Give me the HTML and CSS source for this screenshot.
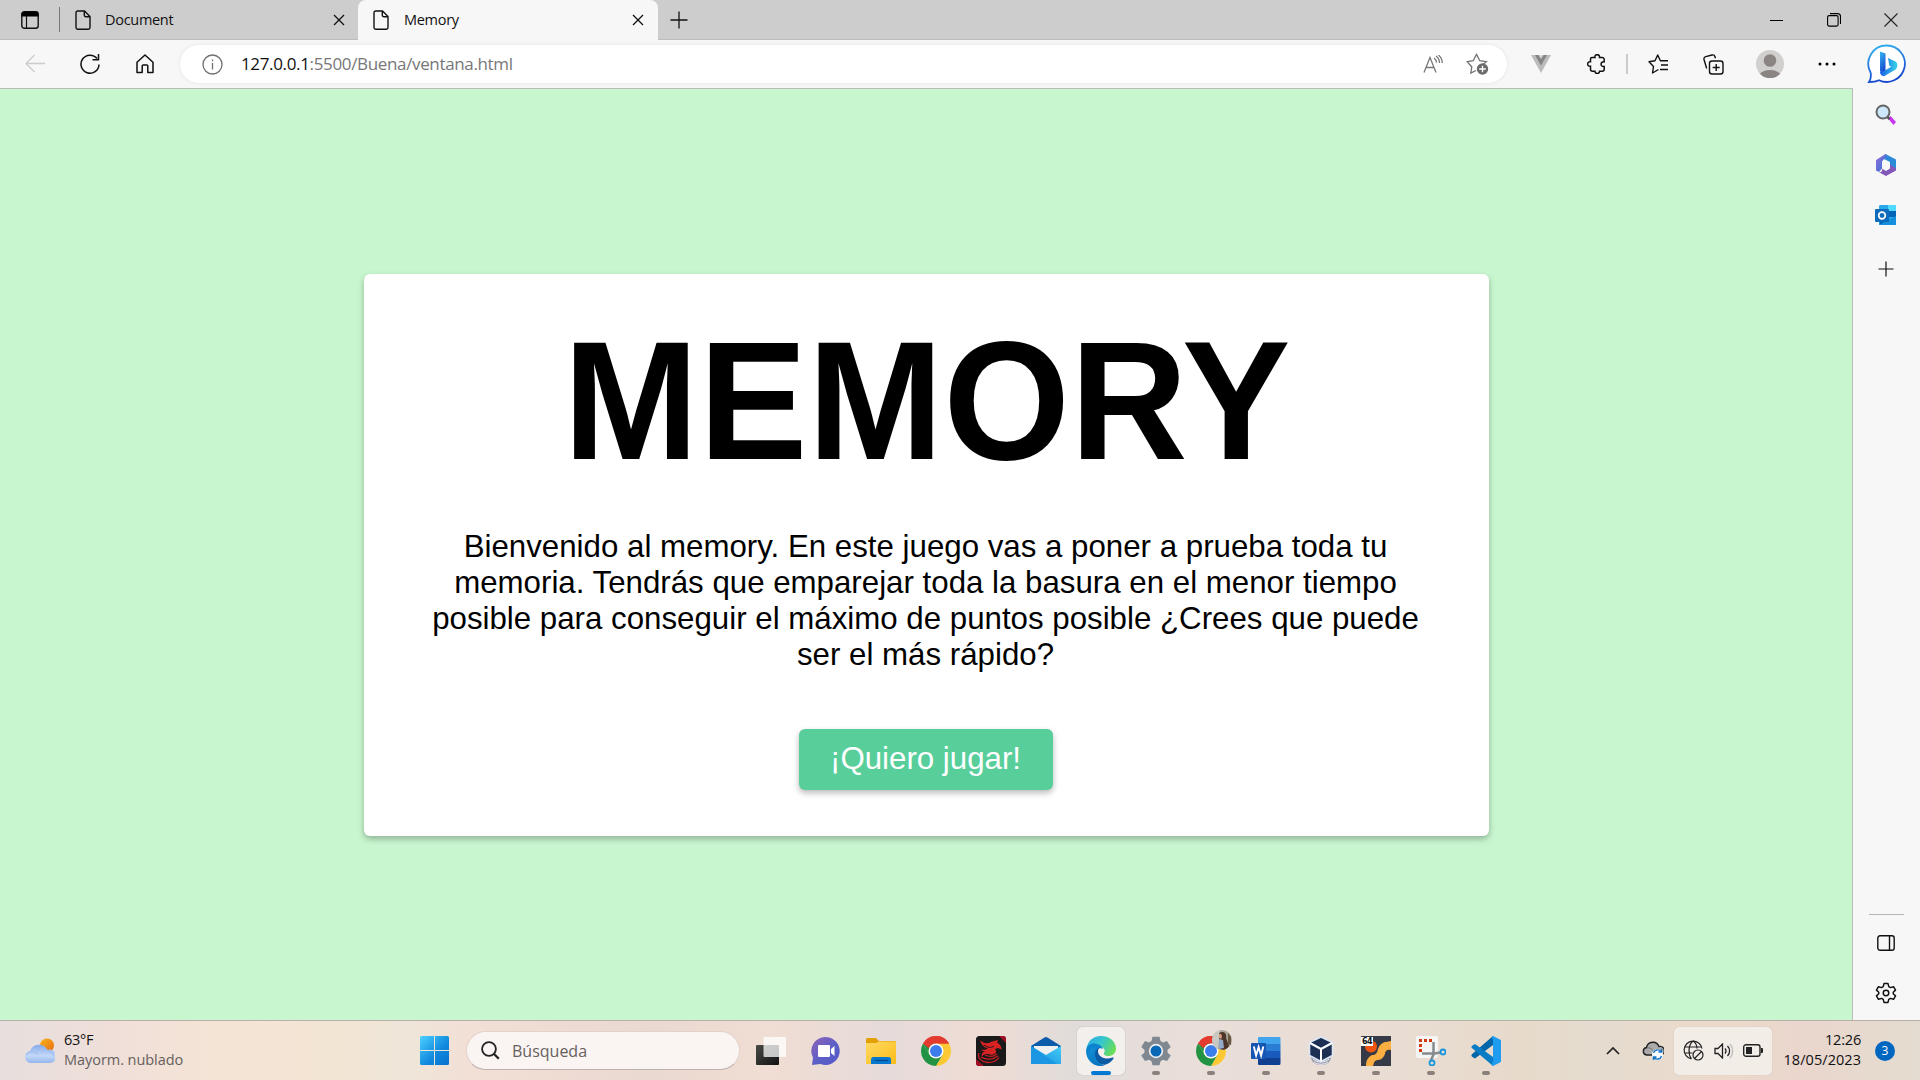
FILE: index.html
```html
<!DOCTYPE html>
<html lang="es">
<head>
<meta charset="utf-8">
<title>Memory</title>
<link rel="stylesheet" href="styles.css">
</head>
<body>
<svg class="defs" width="0" height="0" aria-hidden="true">
  <defs>
    <symbol id="page-icon" viewBox="0 0 16 20"><path d="M3 1h6.500L15 6.500V17.500a1.700 1.700 0 0 1-1.700 1.700H2.700A1.700 1.700 0 0 1 1 17.500V2.700A1.700 1.700 0 0 1 2.700 1zM9.300 1v4.300a1.500 1.500 0 0 0 1.500 1.500H15" fill="none" stroke="#111" stroke-width="1.400"/></symbol>
    <symbol id="close-icon" viewBox="0 0 12 12"><path d="M1 1l10 10M11 1L1 11" stroke="#111" stroke-width="1.300"/></symbol>
    <symbol id="chrome-icon" viewBox="0 0 30 30">
      <path d="M15 15L2.010 7.500A15 15 0 0 1 27.990 7.500z" fill="#e33b2e"/>
      <path d="M15 0a15 15 0 0 1 13 7.500H15z" fill="#e33b2e"/>
      <path d="M27.990 7.500A15 15 0 0 1 15 30L21.500 18.700 15 7.500z" fill="#fcc934"/>
      <path d="M2.010 7.500A15 15 0 0 0 15 30l6.500-11.300H8.500z" fill="#229342"/>
      <path d="M2.010 7.500L8.500 18.700 15 15V7.500z" fill="#229342"/>
      <path d="M2.010 7.500A15 15 0 0 1 28 7.500H15a7.500 7.500 0 0 0-7 5z" fill="#e33b2e"/>
      <circle cx="15" cy="15" r="7.500" fill="#fff"/><circle cx="15" cy="15" r="6" fill="#3b7ded"/>
    </symbol>
    <linearGradient id="g-bing" x1="0" y1="0" x2="0.300" y2="1"><stop offset="0" stop-color="#35b8f2"/><stop offset="1" stop-color="#1747cf"/></linearGradient>
    <linearGradient id="g-bing-b" x1="0" y1="0" x2="1" y2="0"><stop offset="0" stop-color="#1c5ee8"/><stop offset="1" stop-color="#35d3e8"/></linearGradient>
    <linearGradient id="g-win" x1="0" y1="0" x2="1" y2="1"><stop offset="0" stop-color="#4cd0ff"/><stop offset="0.600" stop-color="#0f88dd"/><stop offset="1" stop-color="#0670cf"/></linearGradient>
    <linearGradient id="g-sun" x1="0" y1="0" x2="1" y2="1"><stop offset="0" stop-color="#f6b51e"/><stop offset="1" stop-color="#ea6a10"/></linearGradient>
    <linearGradient id="g-cloud" x1="0" y1="0" x2="0" y2="1"><stop offset="0" stop-color="#85a9e9"/><stop offset="0.600" stop-color="#c3d9f8"/><stop offset="1" stop-color="#94b5ec"/></linearGradient>
    <linearGradient id="g-chat" x1="0" y1="0" x2="1" y2="1"><stop offset="0" stop-color="#9163b8"/><stop offset="0.550" stop-color="#5b5fc7"/><stop offset="1" stop-color="#5558c5"/></linearGradient>
    <linearGradient id="g-folder" x1="0" y1="0" x2="1" y2="1"><stop offset="0" stop-color="#ffd964"/><stop offset="1" stop-color="#fbbc16"/></linearGradient>
    <linearGradient id="g-edge-top" x1="0" y1="0" x2="1" y2="0.500"><stop offset="0" stop-color="#2aa8e3"/><stop offset="0.500" stop-color="#35c5cf"/><stop offset="1" stop-color="#69df54"/></linearGradient>
    <linearGradient id="g-edge-low" x1="0" y1="0" x2="1" y2="1"><stop offset="0" stop-color="#169ddd"/><stop offset="1" stop-color="#0753a0"/></linearGradient>
    <linearGradient id="g-mail" x1="0" y1="1" x2="1" y2="0"><stop offset="0" stop-color="#168bdd"/><stop offset="1" stop-color="#43cdf7"/></linearGradient>
    <linearGradient id="g-loop" x1="0" y1="0" x2="1" y2="1"><stop offset="0" stop-color="#9a6fd8"/><stop offset="1" stop-color="#2a70d8"/></linearGradient>
    <linearGradient id="g-view" x1="0" y1="0" x2="1" y2="1"><stop offset="0" stop-color="#4a4a48"/><stop offset="1" stop-color="#111"/></linearGradient>
  </defs>
</svg>

<header class="tabs">
  <svg class="workspace" width="18" height="18" viewBox="0 0 18 18"><rect x=".8" y=".8" width="16.400" height="16.400" rx="2.500" fill="none" stroke="#111" stroke-width="1.400"/><path d="M.5 5.500V3A2.500 2.500 0 0 1 3 .5h12A2.500 2.500 0 0 1 17.500 3v2.500z"/><path d="M5.500 5v12" stroke="#111" stroke-width="1.200"/></svg>
  <div class="tab-divider"></div>
  <div class="tab">
    <svg width="16" height="20"><use href="#page-icon"/></svg>
    <span class="tab-title title-document">Document</span>
    <svg class="tab-close" width="12" height="12"><use href="#close-icon"/></svg>
  </div>
  <div class="tab active">
    <svg width="16" height="20"><use href="#page-icon"/></svg>
    <span class="tab-title title-memory">Memory</span>
    <svg class="tab-close" width="12" height="12"><use href="#close-icon"/></svg>
  </div>
  <svg class="new-tab" width="18" height="18" viewBox="0 0 18 18"><path d="M9 .5v17M.5 9h17" stroke="#111" stroke-width="1.300"/></svg>
  <div class="window-buttons">
    <svg width="14" height="14" viewBox="0 0 14 14"><path d="M0 7.500h13" stroke="#000"/></svg>
    <svg width="14" height="14" viewBox="0 0 14 14" fill="none" stroke="#000" stroke-width="1.100"><rect x=".6" y="2.600" width="10.500" height="10.500" rx="1.500"/><path d="M3 .6h7.500a3 3 0 0 1 3 3V11"/></svg>
    <svg width="14" height="14" viewBox="0 0 14 14"><path d="M.5.500l13 13M13.500.500l-13 13" stroke="#222" stroke-width="1.100"/></svg>
  </div>
</header>

<nav class="toolbar">
  <svg class="back" width="20" height="20" viewBox="0 0 20 20" fill="none" stroke="#ccc" stroke-width="1.300"><path d="M20 9.500H1M9.500 1L1 9.500 9.500 18"/></svg>
  <svg class="reload" width="20" height="20" viewBox="0 0 20 20" fill="none" stroke="#111" stroke-width="1.500"><path d="M19 10.500A9 9 0 1 1 17 4.500M18.500 0v5.800h-6"/></svg>
  <svg class="home" width="18" height="20" viewBox="0 0 18 20" fill="none" stroke="#111" stroke-width="1.500" stroke-linejoin="round"><path d="M1 8.300L9 1l8 7.300V18.500h-5.200V12a1 1 0 0 0-1-1H7.200a1 1 0 0 0-1 1v6.500H1z"/></svg>
  <div class="address">
    <svg width="21" height="21" viewBox="0 0 21 21" fill="none" stroke="#707070" stroke-width="1.300"><circle cx="10.500" cy="10.500" r="9.500"/><path d="M10.500 9v6.500M10.500 5.500v1.700"/></svg>
    <span class="url"><span class="host">127.0.0.1</span>:5500/Buena/ventana.html</span>
    <svg class="aloud" width="20" height="18" viewBox="0 0 20 18" fill="none" stroke="#777" stroke-width="1.300"><path d="M1 17.500L7 2.500l6 15M3 12.500h8M11 3a6 6 0 0 1 2.500 4.500M13 1a9 9 0 0 1 3.500 7M15.500 0A11 11 0 0 1 19.300 8"/></svg>
    <svg width="23" height="22" viewBox="0 0 23 22"><path d="M10 17.500L4.800 20l1-6L1.200 8.700l6-1L10.500 1.500l3.300 6.200 6.500 1-3 2.500" fill="none" stroke="#707070" stroke-width="1.300"/><circle cx="16.500" cy="16" r="5.700" fill="#6b6b6b"/><path d="M16.500 12.700v6.600M13.200 16h6.600" stroke="#fff" stroke-width="1.300"/></svg>
  </div>
  <svg class="vue" width="20" height="18" viewBox="0 0 20 18"><path d="M0 0h20L10 18z" fill="#bcbcbc"/><path d="M4 0h12l-6 10.500z" fill="#858585"/><path d="M7.500 0h5L10 4z" fill="#d4d4d4"/></svg>
  <svg class="puzzle" width="20" height="20" viewBox="0 0 20 20" fill="none" stroke="#111" stroke-width="1.500"><path d="M5 3.500h3c-.8-3.800 5.200-3.800 4.500 0h2.700a2 2 0 0 1 2 2v2.300c-4.200-.5-4.200 5.300 0 4.700v2.700a2 2 0 0 1-2 2h-2.700c.5 3-5 3-4.500 0H5.500a2 2 0 0 1-2-2v-3c-3.800.7-3.800-5 0-4.500V5a1.500 1.500 0 0 1 1.500-1.500z"/></svg>
  <div class="tool-divider"></div>
  <svg class="favorites" width="21" height="20" viewBox="0 0 21 20" fill="none" stroke="#111" stroke-width="1.400"><path d="M10.500 15.500L4.500 19l1-6.500L1 7.700l6-.9L9.700 1l2.700 5.700H20M13 11h7M12 15.500h8" stroke-linejoin="round"/></svg>
  <svg class="collections" width="21" height="21" viewBox="0 0 21 21" fill="none" stroke="#111" stroke-width="1.400"><rect x="6.500" y="7" width="13.500" height="13" rx="2.500"/><path d="M13.200 10v7M9.700 13.500h7M3.700 14.500L1 5.500A2.500 2.500 0 0 1 2.800 2.600L9 1a2.500 2.500 0 0 1 3 1.800l.4 1.500"/></svg>
  <svg class="avatar" width="28" height="28" viewBox="0 0 28 28"><circle cx="14" cy="14" r="14" fill="#d2d0ce"/><circle cx="14" cy="10.500" r="6.300" fill="#8a8583"/><path d="M4 24a11 7 0 0 1 20 0 14 14 0 0 1-20 0z" fill="#8a8583"/></svg>
  <svg class="more" width="18" height="4" viewBox="0 0 18 4"><circle cx="2" cy="2" r="1.500"/><circle cx="9" cy="2" r="1.500"/><circle cx="16" cy="2" r="1.500"/></svg>
  <svg class="bing" width="40" height="40" viewBox="0 0 40 40"><path d="M20 1.500a18.200 18.200 0 1 1-8 34.700c-3 1.500-6 1.800-10 1.800 1.700-2.500 2.500-5 1.600-9.500A18.200 18.200 0 0 1 20 1.500z" fill="#fff" stroke="url(#g-bing)" stroke-width="1.800"/><path d="M13 7.500l5.500 2v17.700L15.500 30 13 27z" fill="url(#g-bing)"/><path d="M21 14l7.500 3.500c2.800 2 2.300 6 0 8L17.500 32c-2 1-4.500-1.500-4.500-4l3.500-.7 7.800-4.500-2-1z" fill="url(#g-bing-b)"/></svg>
</nav>

<div class="browser-body">
  <main class="viewport">
    <section class="card">
      <h1>MEMORY</h1>
      <p>Bienvenido al memory. En este juego vas a poner a prueba toda tu memoria. Tendrás que emparejar toda la basura en el menor tiempo posible para conseguir el máximo de puntos posible ¿Crees que puede ser el más rápido?</p>
      <button type="button">¡Quiero jugar!</button>
    </section>
  </main>
  <aside class="sidebar">
    <svg width="22" height="22" viewBox="0 0 22 22"><path d="M13 14.500l2.500-2.500 5.500 6-2.500 3z" fill="#c936f0"/><path d="M11.500 12l3 3" stroke="#555" stroke-width="2.500"/><circle cx="8" cy="8" r="6.500" fill="#cce8fa" stroke="#666" stroke-width="2"/></svg>
    <svg class="m365" width="22" height="24" viewBox="0 0 22 24"><path d="M10.500 1L21 6.500v10L15 13.500V9L9 6 5 8z" fill="#2c8bd8"/><path d="M10.500 1c2 1.500 1 4-1.500 5L7 8.500v7L4 19l-3-1.500V7z" fill="url(#g-loop)"/><path d="M21 11.500v6L11 23l-7-3.800c2 .3 4-1.200 3-3.700l4 2.500 4-2.500v-4l6 4z" fill="#8257b9"/></svg>
    <svg class="outlook" width="22" height="22" viewBox="0 0 22 22"><path d="M5 1h16v20H4V2z" fill="#28a8ea"/><path d="M13 1h8v6h-8z" fill="#50d9ff"/><path d="M13 7h8v6h-8zM4 13h9v8H5z" fill="#0364b8"/><path d="M4 21l17-9v8a1 1 0 0 1-1 1z" fill="#1490df"/><rect y="5" width="14" height="13" rx="1" fill="#0f6cbd"/><circle cx="7" cy="11.500" r="3.300" fill="none" stroke="#fff" stroke-width="1.700"/></svg>
    <svg class="side-plus" width="16" height="16" viewBox="0 0 16 16"><path d="M8 .5v15M.5 8h15" stroke="#111" stroke-width="1.200"/></svg>
    <div class="side-divider"></div>
    <svg class="panel" width="18" height="16" viewBox="0 0 18 16" fill="none" stroke="#111" stroke-width="1.400"><rect x=".8" y=".8" width="16.400" height="14.400" rx="2.200"/><path d="M12.500 1v14"/></svg>
    <svg width="22" height="22" viewBox="0 0 24 24" fill="none" stroke="#111" stroke-width="1.600" stroke-linejoin="round"><circle cx="12" cy="12" r="3"/><path d="M9.800 1.700h4.400l.8 3.300 1.900 1.100 3.300-1 2.200 3.800-2.500 2.300v1.600l2.500 2.300-2.200 3.800-3.300-1-1.900 1.100-.8 3.300H9.800L9 19l-1.900-1.100-3.300 1-2.200-3.800 2.500-2.300v-1.600L1.600 8.900l2.200-3.800 3.300 1L9 5z"/></svg>
  </aside>
</div>

<footer class="taskbar">
  <div class="weather">
    <svg width="30" height="26" viewBox="0 0 30 26"><circle cx="22" cy="7.500" r="7" fill="url(#g-sun)"/><path d="M6 25a6 6 0 0 1-1-11.900A9.500 9.500 0 0 1 22.500 12 6.700 6.700 0 1 1 24 25z" fill="url(#g-cloud)"/><path d="M1 17c4-5 9-4 12-1M17 14c3-3 9-2 12 4" fill="none" stroke="#a6c1f1" stroke-width="1.500"/></svg>
    <div class="weather-text"><span class="temp">63°F</span><span class="condition">Mayorm. nublado</span></div>
  </div>
  <svg class="start" width="29" height="29" viewBox="0 0 29 29"><path d="M1.500 0H14v14H0V1.500A1.500 1.500 0 0 1 1.500 0zM15 0h12.500A1.500 1.500 0 0 1 29 1.500V14H15zM0 15h14v14H1.500A1.500 1.500 0 0 1 0 27.500zM15 15h14v12.500a1.500 1.500 0 0 1-1.500 1.500H15z" fill="url(#g-win)"/></svg>
  <div class="search">
    <svg width="19" height="19" viewBox="0 0 19 19" fill="none" stroke="#222"><circle cx="8" cy="8" r="6.900" stroke-width="1.800"/><path d="M12.800 12.800l5 5" stroke-width="2.300"/></svg>
    <span>Búsqueda</span>
  </div>
  <div class="apps">
    <div class="app"><svg width="30" height="30" viewBox="0 0 30 30"><rect y="9" width="23" height="20" rx="1" fill="url(#g-view)"/><rect x="7.500" y="1" width="22.500" height="20" rx="1" fill="#fff" opacity=".75"/></svg></div>
    <div class="app"><svg width="30" height="30" viewBox="0 0 30 30"><path d="M15 1a14 14 0 1 1-5.500 27L1 29l1-7.500A14 14 0 0 1 15 1z" fill="url(#g-chat)"/><path d="M8 9h10a1 1 0 0 1 1 1v10a1 1 0 0 1-1 1H8a1 1 0 0 1-1-1V10a1 1 0 0 1 1-1zM20 13l3.500-3v10L20 17z" fill="#fff"/></svg></div>
    <div class="app"><svg width="30" height="30" viewBox="0 0 30 30"><path d="M0 3.500A1.500 1.500 0 0 1 1.500 2H10l3 3h16a1 1 0 0 1 1 1v5H0z" fill="#e2a007"/><path d="M0 7h10l3-1.500h17V28H0z" fill="url(#g-folder)"/><path d="M5 28v-4.500A2.500 2.500 0 0 1 7.500 21h15a2.500 2.500 0 0 1 2.500 2.500V28z" fill="#0878cf"/><path d="M9 24.500h13" stroke="#06478a" stroke-width="1.200"/></svg></div>
    <div class="app"><svg width="30" height="30"><use href="#chrome-icon"/></svg></div>
    <div class="app"><svg width="30" height="30" viewBox="0 0 30 30"><rect width="30" height="30" rx="3.500" fill="#191919"/><path d="M23 0h4a3 3 0 0 1 3 3v4zM0 23v4a3 3 0 0 0 3 3h5z" fill="#a00e22"/><path d="M4 4c5 5 9 3 12 1.500L22 4l-1 2.500c3 1.500 4.500 4 4.500 7L22 12l-3 1c3 4-1 6.500-5 5.500-4-1-7 0-8 2-1-3 1-5 4-5-3 0-4-1-5-2 3 1 5 0 7-1-4-1-7-4-8-8.500z" fill="#d92323"/><path d="M3 17c-2 5 3 9.500 9 9.500 5 0 9-2 11-5M5 21c5 3 12 3 17-1M9 19c4 2 8 2 12-1" fill="none" stroke="#c81f22" stroke-width="1.300"/><path d="M8 9c4 3 7 3 10 1" fill="none" stroke="#191919"/></svg></div>
    <div class="app"><svg width="30" height="30" viewBox="0 0 30 30"><path d="M0 10L13.500 1.500a3 3 0 0 1 3 0L30 10v5H0z" fill="#0d5cab"/><path d="M3 10h24v5L15 20 3 14z" fill="#f0f0f0"/><path d="M0 10l15 9 15-9v18H0z" fill="url(#g-mail)"/><path d="M0 28V10l26 18z" fill="#1b96e2"/></svg></div>
    <div class="app current"><svg width="30" height="30" viewBox="0 0 30 30"><path d="M.3 14C1 5.500 7 0 15 0c9 0 15 6 15 12.500 0 5-4 7.500-8 7.500-3 0-5-1.300-4-3 2-3-.5-6-4-6C7 11 1 18 3 24A15 15 0 0 1 .3 14z" fill="url(#g-edge-top)"/><path d="M.2 15C.5 9 5 7 9 7.500c4 .5 7 2.500 8 5.500-6-3-9 5-4 12 2 3 4 4.500 6 4.500C9 32 0 25 .2 15z" fill="#0c83cf"/><path d="M13.500 11.500C7 14 8 24 14 27.500c4 3 10 .5 13.500-5 .5-1-.3-1.300-1-1C20 24.500 12 21 12 15.500c0-1.500.5-3 1.500-4z" fill="#0c59a4"/><path d="M3 23C1 16 6 9 12 11c-5 3-6 10-2 15 3 4 7 3.500 9 3.500C12 31 5 28.500 3 23z" fill="url(#g-edge-low)" opacity=".65"/></svg></div>
    <div class="app open"><svg width="30" height="30" viewBox="0 0 30 30"><path d="M11.500.800h7l1 4.200 2.500 1.500L26 5l3.700 6-3.200 3v2.500l3.200 3L26 25l-4-1.200-2.500 1.500-1 4h-7l-1-4L8 23.800 4 25 .3 19.500l3.200-3V14L.3 11 4 5l4 1.500L10.500 5z" fill="#7f8790"/><circle cx="15" cy="15" r="7.200" fill="#edf0f3"/><circle cx="15" cy="15" r="5.500" fill="#0968b5"/></svg></div>
    <div class="app open profile"><svg width="30" height="30"><use href="#chrome-icon"/></svg><svg class="profile-badge" width="20" height="20" viewBox="0 0 20 20"><circle cx="10" cy="10" r="10" fill="#a9a298"/><path d="M0 10A10 10 0 0 1 8 .2L6 19A10 10 0 0 1 0 10z" fill="#c9c9c4"/><path d="M7 3c5-3 8 1 7 5l3 8c-3 5-8 4-10 2z" fill="#4c342b"/><path d="M7 4c2-1 3 1 3 3l-1 2-2-1z" fill="#d49b7e"/><path d="M7 9l4 1 1 8-5 1z" fill="#95a9c8"/><path d="M16 3l3 4v8l-3-1z" fill="#6a553f"/></svg></div>
    <div class="app open"><svg width="30" height="30" viewBox="0 0 30 30"><path d="M8 1h20a1.500 1.500 0 0 1 1.500 1.500V8H7V2a1 1 0 0 1 1-1z" fill="#41a5ee"/><path d="M7 8h22.500v7H7z" fill="#2b7cd3"/><path d="M7 15h22.500v7H7z" fill="#185abd"/><path d="M7 22h22.500v5.500A1.500 1.500 0 0 1 28 29H8a1 1 0 0 1-1-1z" fill="#103f91"/><rect y="7" width="15" height="16" rx="1" fill="#1755b2"/><path d="M2.800 10.500l2.300 9 2.500-8.500 2.500 8.500 2.200-9" fill="none" stroke="#fff" stroke-width="1.900"/></svg></div>
    <div class="app open"><svg width="30" height="30" viewBox="0 0 30 30"><path d="M5 20c0 6 4 9 10 9s10-3 10-9z" fill="#9a9cab"/><path d="M7 23c4 4 12 4 16 0M8 26c4 3 10 3 14 0" fill="none" stroke="#eeeff8"/><path d="M15 1l11.500 5.500v13L15 25.500 3.500 19.500v-13z" fill="#1c3054" stroke="#dce7f5" stroke-width="1.600"/><path d="M4 7l11 6 11-6M15 13v12" fill="none" stroke="#fff" stroke-width="2"/></svg></div>
    <div class="app open numbered"><svg width="30" height="30" viewBox="0 0 30 30"><path fill="#363a46" d="M0 0h30v30H0z"/><circle cx="10" cy="10.500" r="6" fill="#ef5410"/><path d="M5 30c0-7 3-9 6-11 4 0 5-2 6-6 2-5 5-7 8-7l5-1v9c-4-1-6 1-6 4-2 5-5 6-8 6-3 1-3 3-4 6z" fill="#fbae42"/></svg><span class="app-number">64</span></div>
    <div class="app open"><svg width="30" height="30" viewBox="0 0 30 30"><rect width="22" height="22" rx="2" fill="#f5f5f5"/><path d="M16 4.500H4.500V18" fill="none" stroke="#d33810" stroke-width="3" stroke-dasharray="3 2"/><path d="M17.500 6v12.500L15 24M6 17.500h12.500l5.500-1" fill="none" stroke="#858a8d" stroke-width="2.500"/><g fill="none" stroke="#1796df" stroke-width="1.800"><circle cx="27" cy="16" r="2.500"/><circle cx="16" cy="27" r="2.500"/></g></svg></div>
    <div class="app open"><svg width="30" height="30" viewBox="0 0 30 30"><path d="M22 0v9L4 22.500 1.500 21c-1.500-1-1.500-2 0-3.200z" fill="#0065a9"/><path d="M4 8l18 13v9L1.500 12.500c-1.500-1-1.500-2 0-3z" fill="#087dc5"/><path d="M22 0l7 3.500a2 2 0 0 1 1 1.500v20a2 2 0 0 1-1 1.500L22 30l-1.500-1 1.500-3V4l-1.500-3z" fill="#1f9cf0"/></svg></div>
  </div>
  <div class="tray">
    <svg width="14" height="9" viewBox="0 0 14 9"><path d="M1 8l6-6 6 6" fill="none" stroke="#222" stroke-width="1.700"/></svg>
    <svg class="cloud" width="22" height="20" viewBox="0 0 22 20"><path d="M4.500 14a3.800 3.800 0 0 1 0-7.500A6.500 6.500 0 0 1 17 5.500a4.300 4.300 0 0 1 2 8.500z" fill="#aaa" stroke="#222" stroke-width="1.400"/><path d="M5 7c5-1 5 3 8 4" fill="none" stroke="#777"/><circle cx="15.500" cy="13.500" r="5.500" fill="#fff"/><path d="M11.500 12a4.300 4.300 0 0 1 7.500-1.500M19.500 8v3h-3M19.500 15a4.300 4.300 0 0 1-7.500 1.500M11.500 19v-3h3" fill="none" stroke="#1473c9" stroke-width="1.400"/></svg>
    <div class="status">
      <svg width="21" height="21" viewBox="0 0 21 21" fill="none" stroke="#222" stroke-width="1.200"><path d="M8.500 19A9 9 0 1 1 19 8.500M1.500 7h17M1.500 13h8M10 1c-5 4-5 13-1.500 18M10 1c3 2 4 4.500 4 7.500"/><circle cx="15" cy="15" r="5"/><path d="M11.500 18.500l7-7"/></svg>
      <svg width="20" height="16" viewBox="0 0 20 16" fill="none" stroke="#222" stroke-width="1.300"><path d="M1 5.500h3L8.500 1v14L4 10.500H1zM11 5.500a4 4 0 0 1 0 5M13.500 3a7 7 0 0 1 0 10"/><path d="M16 1a10.500 10.500 0 0 1 0 14" stroke="#bbb"/></svg>
      <svg width="20" height="13" viewBox="0 0 20 13"><rect x=".7" y=".7" width="16.300" height="11.600" rx="2.300" fill="none" stroke="#222" stroke-width="1.400"/><rect x="3" y="3" width="6" height="7" fill="#222"/><path d="M18 4h1a1 1 0 0 1 1 1v3a1 1 0 0 1-1 1h-1z" fill="#222"/></svg>
    </div>
    <div class="clock"><span class="time">12:26</span><span class="date">18/05/2023</span></div>
    <span class="notifications">3</span>
  </div>
</footer>
</body>
</html>
```

FILE: styles.css
```css
* {
  box-sizing: border-box;
}

body {
  margin: 0;
  width: 1920px;
  height: 1080px;
  overflow: hidden;
  display: flex;
  flex-direction: column;
  font-family: "Open Sans", "Noto Sans", sans-serif;
  color: #111;
  background: #f7f7f7;
}

svg {
  display: block;
  flex: none;
}

.defs {
  position: absolute;
}

/* Tab strip */
.tabs {
  height: 40px;
  flex: none;
  display: flex;
  align-items: center;
  background: #cdcdcd;
  border-bottom: 1px solid #bdbdbd;
}

.workspace {
  margin-left: 21px;
}

.tab-divider {
  width: 1px;
  height: 25px;
  margin-left: 20px;
  background: #777;
}

.tab {
  width: 298px;
  height: 40px;
  padding: 0 13px 0 15px;
  display: flex;
  align-items: center;
}

.tab.active {
  width: 300px;
  padding-right: 14px;
  background: #f7f7f7;
  border-radius: 8px 8px 0 0;
}

.tab-title {
  flex: 1;
  margin-left: 14px;
  font-size: 14.500px;
  line-height: 20px;
  white-space: nowrap;
}

.title-document {
  letter-spacing: -0.300px;
}

.title-memory {
  margin-left: 15px;
  letter-spacing: -0.300px;
}

.new-tab {
  margin-left: 12px;
}

.window-buttons {
  margin-left: auto;
  margin-right: 22px;
  display: flex;
  gap: 43px;
}

/* Toolbar */
.toolbar {
  height: 48px;
  flex: none;
  display: flex;
  align-items: center;
}

.back {
  margin-left: 25px;
}

.reload {
  margin-left: 35px;
}

.home {
  margin-left: 36px;
}

.address {
  width: 1327px;
  height: 38px;
  margin-left: 26px;
  padding: 0 18px 0 22px;
  display: flex;
  align-items: center;
  background: #fff;
  border-radius: 19px;
  box-shadow: 0 0 4px rgba(0, 0, 0, 0.080);
}

.url {
  flex: 1;
  margin-left: 18px;
  padding-bottom: 2px;
  font-size: 17px;
  letter-spacing: -0.350px;
  color: #777;
}

.host {
  color: #111;
}

.aloud {
  margin-right: 23px;
}

.vue {
  margin-left: 24px;
}

.puzzle {
  margin-left: 36px;
}

.tool-divider {
  width: 2px;
  height: 20px;
  margin-left: 19px;
  background: #ccc;
}

.favorites {
  margin-left: 20px;
}

.collections {
  margin-left: 34px;
}

.avatar {
  margin-left: 32px;
}

.more {
  margin-left: 34px;
}

.bing {
  margin-left: 31px;
}

/* Page and sidebar */
.browser-body {
  height: 932px;
  flex: none;
  display: flex;
}

.viewport {
  width: 1853px;
  display: flex;
  justify-content: center;
  align-items: flex-start;
  padding-top: 185px;
  background: #c8f7cf;
  border-top: 1px solid #b8bdb8;
  border-right: 1px solid #b8bdb8;
  font-family: "Liberation Sans", Arial, sans-serif;
}

.card {
  width: 1125px;
  height: 562px;
  margin-left: 1px;
  padding: 39px 63px 0 61px;
  display: flex;
  flex-direction: column;
  align-items: center;
  text-align: center;
  color: #000;
  background: #fff;
  border-radius: 6px;
  box-shadow: 0 3px 6px rgba(0, 0, 0, 0.280);
}

.card h1 {
  margin: 0;
  padding-left: 3px;
  font-size: 162.500px;
  line-height: 187px;
  letter-spacing: 0.400px;
  transform: translateY(-3.500px) scaleY(1.040);
  transform-origin: 50% 151px;
}

.card p {
  margin: 29px 0 56px;
  font-size: 31.250px;
  line-height: 36px;
}

.card button {
  width: 254px;
  height: 61px;
  padding: 0 0 1px;
  border: 0;
  border-radius: 6px;
  background: #58ce9b;
  color: #fff;
  font-family: inherit;
  font-size: 31.250px;
  box-shadow: 0 3px 6px rgba(0, 0, 0, 0.280);
}

.sidebar {
  width: 67px;
  display: flex;
  flex-direction: column;
  align-items: center;
  padding: 16px 1px 16px 0;
}

.m365 {
  margin-top: 27px;
}

.outlook {
  margin-top: 27px;
}

.side-plus {
  margin-top: 35px;
}

.side-divider {
  width: 35px;
  height: 1px;
  margin-top: auto;
  background: #b5b5b5;
}

.panel {
  margin: 20px 0 31px;
}

/* Taskbar */
.taskbar {
  height: 60px;
  flex: none;
  display: flex;
  align-items: center;
  border-top: 1px solid #b9aeaa;
  background: linear-gradient(90deg, #e6dfdd 0, #f0dfd9 110px, #f4e4d6 210px, #f3e5d4 340px, #eee6d9 400px, #f2dfd6 470px, #ead9d1 650px, #f0ddd3 770px, #e6dbda 890px, #efdcd4 980px, #e0dcda 1080px, #e9ded9 1180px, #e9ddd3 1400px, #e7dacb 1520px, #e4dccf 1600px, #ecdacb 1720px, #ead6cd 1800px, #e4dcd0 1920px);
}

.weather {
  width: 395px;
  padding-left: 25px;
  display: flex;
  align-items: center;
  gap: 9px;
}

.weather-text {
  display: flex;
  flex-direction: column;
  padding-bottom: 2px;
  font-size: 14.500px;
  line-height: 20px;
}

.temp {
  letter-spacing: -0.250px;
}

.condition {
  letter-spacing: -0.050px;
  color: #66605d;
}

.start {
  margin-left: 25px;
}

.search {
  width: 274px;
  height: 39px;
  margin-left: 17px;
  padding-left: 14px;
  display: flex;
  align-items: center;
  gap: 12px;
  background: #faf5f3;
  border: 1px solid #e2d2cb;
  border-bottom-color: #bdb0ab;
  border-radius: 20px;
  font-size: 16px;
  color: #66605d;
}

.apps {
  margin-left: 7px;
  display: flex;
  gap: 7px;
}

.app {
  width: 48px;
  height: 48px;
  display: flex;
  align-items: center;
  justify-content: center;
  position: relative;
}

.app.current {
  background: #f3efed;
  border-radius: 5px;
  box-shadow: 0 0 1px rgba(0, 0, 0, 0.350);
}

.app.open::after,
.app.current::after {
  content: "";
  position: absolute;
  bottom: 0;
  left: 20px;
  width: 8px;
  height: 4px;
  border-radius: 2px;
  background: #8b817c;
}

.app.current::after {
  left: 14px;
  width: 20px;
  background: #0078d4;
}

.profile-badge {
  position: absolute;
  top: 3px;
  left: 25px;
}

.app-number {
  position: absolute;
  top: 10px;
  left: 9px;
  width: 12px;
  height: 9px;
  background: #fff;
  font: bold 8px/9px "DejaVu Sans", sans-serif;
  letter-spacing: -0.500px;
  text-align: center;
}

.tray {
  flex: 1;
  margin-right: 25px;
  display: flex;
  align-items: center;
  justify-content: flex-end;
}

.cloud {
  margin-left: 22px;
}

.status {
  width: 98px;
  height: 48px;
  margin-left: 10px;
  padding: 0 9px;
  display: flex;
  align-items: center;
  justify-content: space-between;
  background: #f3ede8;
  border-radius: 5px;
  box-shadow: 0 0 1px rgba(0, 0, 0, 0.200);
}

.clock {
  width: 89px;
  display: flex;
  flex-direction: column;
  align-items: flex-end;
  padding-bottom: 2px;
  font-size: 14.500px;
  line-height: 20px;
  white-space: nowrap;
}

.time {
  letter-spacing: -0.200px;
}

.date {
  letter-spacing: 0.050px;
}

.notifications {
  width: 20px;
  height: 20px;
  margin-left: 14px;
  border-radius: 50%;
  background: #0067c0;
  color: #fff;
  font-size: 12px;
  line-height: 20px;
  text-align: center;
}
```
